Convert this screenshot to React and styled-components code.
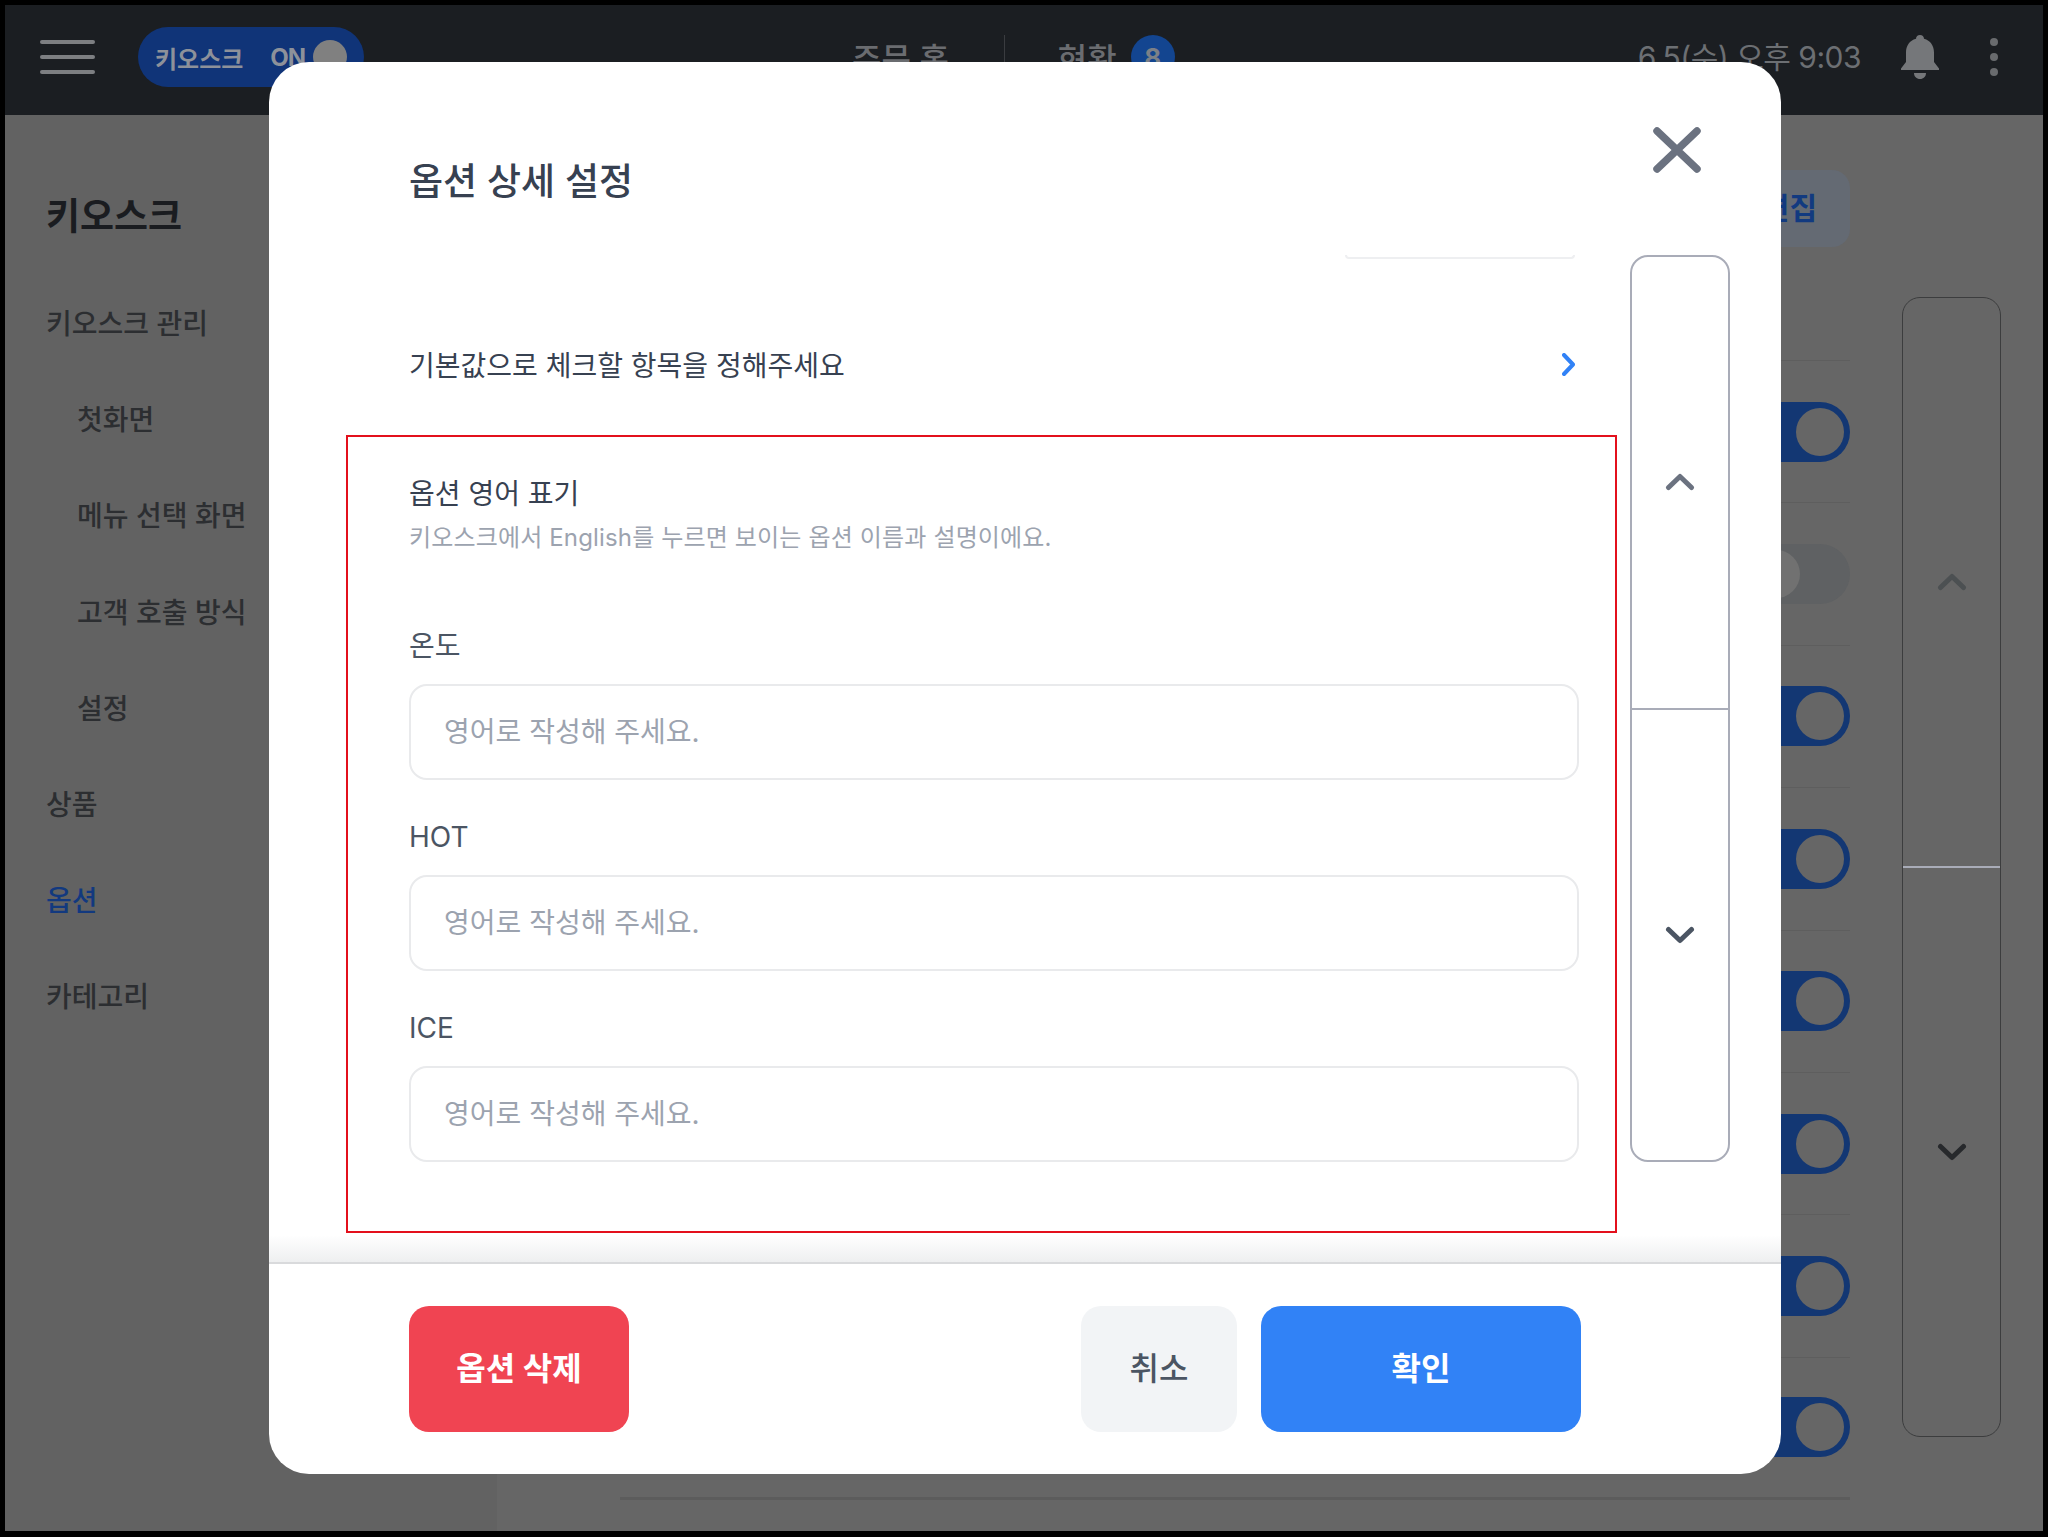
import React from "react";
import styled, { createGlobalStyle } from "styled-components";

const GlobalStyle = createGlobalStyle`
  * {
    box-sizing: border-box;
  }
  html,
  body {
    margin: 0;
    padding: 0;
    background: #000;
  }
  body {
    font-family: Inter, "Noto Sans CJK KR", sans-serif;
  }
`;

const menuItems = [
  { label: "키오스크 관리" },
  { label: "첫화면", sub: true },
  { label: "메뉴 선택 화면", sub: true },
  { label: "고객 호출 방식", sub: true },
  { label: "설정", sub: true },
  { label: "상품" },
  { label: "옵션", active: true },
  { label: "카테고리" },
];

const toggles = [true, false, true, true, true, true, true, true];
const fields = ["온도", "HOT", "ICE"];

const Chevron = ({ dir, color, width = 30, height = 18, stroke = 5 }) => {
  const points = {
    up: `${stroke / 2 + 1},${height - stroke / 2 - 1} ${width / 2},${stroke / 2 + 1} ${width - stroke / 2 - 1},${height - stroke / 2 - 1}`,
    down: `${stroke / 2 + 1},${stroke / 2 + 1} ${width / 2},${height - stroke / 2 - 1} ${width - stroke / 2 - 1},${stroke / 2 + 1}`,
    right: `${stroke / 2},${stroke / 2} ${width - stroke / 2},${height / 2} ${stroke / 2},${height - stroke / 2}`,
  }[dir];
  return (
    <svg width={width} height={height} viewBox={`0 0 ${width} ${height}`} fill="none">
      <polyline
        points={points}
        stroke={color}
        strokeWidth={stroke}
        strokeLinecap="round"
        strokeLinejoin="round"
      />
    </svg>
  );
};

const ScrollControl = ({ dark }) => (
  <ScrollBox $dark={dark}>
    <ScrollHalf $dark={dark}>
      <Chevron dir="up" color={dark ? "#4c5052" : "#6b7280"} />
    </ScrollHalf>
    <ScrollHalf $dark={dark}>
      <Chevron dir="down" color={dark ? "#27292c" : "#4b5563"} />
    </ScrollHalf>
  </ScrollBox>
);

const App = () => {
  return (
    <>
      <GlobalStyle />
      <Shell>
        <TopBar>
          <Hamburger>
            <span />
            <span />
            <span />
          </Hamburger>
          <KioskPill>
            <PillLabel>키오스크</PillLabel>
            <PillSwitch>
              <PillState>ON</PillState>
              <PillKnob />
            </PillSwitch>
          </KioskPill>
          <CenterNav>
            <NavText>주문 홈</NavText>
            <NavDivider />
            <NavText>현황</NavText>
            <NavBadge>8</NavBadge>
          </CenterNav>
          <TopRight>
            <TimeText>6.5(수) 오후 9:03</TimeText>
            <svg width="38" height="44" viewBox="0 0 38 44" fill="#75777a">
              <path d="M19 0c2.4 0 4 1.700 4 3.800C29.500 5.500 33 11 33 17.500V27l5 6.500V35H0v-1.500L5 27v-9.500C5 11 8.500 5.500 15 3.800 15 1.700 16.600 0 19 0z" />
              <path d="M13 38h12c0 3.500-2.500 6-6 6s-6-2.500-6-6z" />
            </svg>
            <MoreDots>
              <span />
              <span />
              <span />
            </MoreDots>
          </TopRight>
        </TopBar>

        <PageBody>
          <Sidebar>
            <SideTitle>키오스크</SideTitle>
            {menuItems.map((item) => (
              <SideItem key={item.label} $sub={item.sub} $active={item.active}>
                {item.label}
              </SideItem>
            ))}
          </Sidebar>
          <Main>
            <OptionColumn>
              <EditBar>
                <EditButton>편집</EditButton>
              </EditBar>
              <ListHead />
              {toggles.map((on, i) => (
                <OptionRow key={i} $last={i === toggles.length - 1}>
                  <Toggle $on={on}>
                    <ToggleKnob $on={on} />
                  </Toggle>
                </OptionRow>
              ))}
            </OptionColumn>
            <PageScroll>
              <ScrollControl dark />
            </PageScroll>
          </Main>
        </PageBody>

        <DialogLayer>
          <Modal>
            <ModalHeader>
              <ModalTitle>옵션 상세 설정</ModalTitle>
              <CloseButton aria-label="닫기">
                <svg width="48" height="46" viewBox="0 0 48 46" fill="none">
                  <path
                    d="M4 4l40 38M44 4L4 42"
                    stroke="#6b7280"
                    strokeWidth="7.5"
                    strokeLinecap="round"
                  />
                </svg>
              </CloseButton>
            </ModalHeader>

            <ModalBody>
              <ContentColumn>
                <ClippedInputEdge />
                <DefaultRow>
                  <RowText>기본값으로 체크할 항목을 정해주세요</RowText>
                  <Chevron dir="right" color="#3182f6" width={13} height={23} stroke={4} />
                </DefaultRow>
                <HighlightBox>
                  <SectionTitle>옵션 영어 표기</SectionTitle>
                  <SectionHint>키오스크에서 English를 누르면 보이는 옵션 이름과 설명이에요.</SectionHint>
                  <FieldList>
                    {fields.map((name) => (
                      <Field key={name}>
                        <FieldLabel>{name}</FieldLabel>
                        <FieldInput placeholder="영어로 작성해 주세요." readOnly />
                      </Field>
                    ))}
                  </FieldList>
                </HighlightBox>
              </ContentColumn>
              <ScrollControl />
            </ModalBody>

            <ModalFooter>
              <DeleteButton>옵션 삭제</DeleteButton>
              <FooterRight>
                <CancelButton>취소</CancelButton>
                <ConfirmButton>확인</ConfirmButton>
              </FooterRight>
            </ModalFooter>
          </Modal>
        </DialogLayer>
      </Shell>
    </>
  );
};

export default App;

const Shell = styled.div`
  position: relative;
  margin: 5px;
  width: 2038px;
  height: 1526px;
  display: flex;
  flex-direction: column;
  overflow: hidden;
  background: #666;
`;

const TopBar = styled.header`
  height: 110px;
  flex-shrink: 0;
  display: flex;
  align-items: center;
  padding: 0 45px 6px 35px;
  background: #1b1e22;
`;

const Hamburger = styled.div`
  width: 55px;
  display: flex;
  flex-direction: column;
  gap: 11px;
  span {
    height: 4px;
    border-radius: 2px;
    background: #7d7f82;
  }
`;

const KioskPill = styled.div`
  width: 226px;
  height: 60px;
  margin-left: 43px;
  padding-left: 17px;
  display: flex;
  align-items: center;
  border-radius: 30px;
  background: #103478;
`;

const PillLabel = styled.span`
  font-size: 24px;
  font-weight: 700;
  color: #8d919a;
  white-space: nowrap;
`;

const PillSwitch = styled.div`
  display: flex;
  align-items: center;
  margin-left: 27px;
  gap: 8px;
`;

const PillState = styled.span`
  font-size: 24px;
  font-weight: 700;
  letter-spacing: -1px;
  color: #8d919a;
`;

const PillKnob = styled.span`
  width: 34px;
  height: 34px;
  border-radius: 50%;
  background: #808080;
`;

const CenterNav = styled.div`
  display: flex;
  align-items: center;
  margin-left: 488px;
`;

const NavText = styled.span`
  font-size: 32px;
  font-weight: 500;
  color: #6a6c70;
  white-space: nowrap;
`;

const NavDivider = styled.span`
  width: 1px;
  height: 44px;
  margin: 0 53px 0 55px;
  background: #3a3c40;
`;

const NavBadge = styled.span`
  width: 44px;
  height: 44px;
  margin-left: 14px;
  display: flex;
  align-items: center;
  justify-content: center;
  border-radius: 50%;
  font-size: 26px;
  font-weight: 700;
  color: #7c8087;
  background: #134590;
`;

const TopRight = styled.div`
  margin-left: auto;
  display: flex;
  align-items: center;
`;

const TimeText = styled.span`
  margin: 0 40px 5px 0;
  font-size: 30px;
  letter-spacing: -0.5px;
  color: #6c6f73;
  white-space: nowrap;
`;

const MoreDots = styled.div`
  margin-left: 51px;
  display: flex;
  flex-direction: column;
  gap: 7px;
  span {
    width: 8px;
    height: 8px;
    border-radius: 50%;
    background: #696b6e;
  }
`;

const PageBody = styled.div`
  flex: 1;
  display: flex;
  min-height: 0;
`;

const Sidebar = styled.nav`
  width: 492px;
  flex-shrink: 0;
  padding: 79px 0 0 41px;
  display: flex;
  flex-direction: column;
  background: #626262;
`;

const SideTitle = styled.h2`
  margin: 0 0 66px;
  font-size: 37px;
  line-height: 46px;
  font-weight: 700;
  color: #1a1c20;
`;

const SideItem = styled.div`
  height: 96.2px;
  padding-left: ${(props) => (props.$sub ? "31px" : "0")};
  font-size: 28px;
  line-height: 36px;
  font-weight: 500;
  color: ${(props) => (props.$active ? "#12397f" : "#2c2e31")};
`;

const Main = styled.main`
  flex: 1;
  display: flex;
  padding: 55px 42px 0 123px;
  gap: 52px;
`;

const OptionColumn = styled.div`
  flex: 1;
  display: flex;
  flex-direction: column;
`;

const EditBar = styled.div`
  display: flex;
  justify-content: flex-end;
`;

const EditButton = styled.button`
  height: 77px;
  width: 220px;
  padding: 0 33px 5px 0;
  border: 0;
  border-radius: 18px;
  text-align: right;
  font-family: inherit;
  font-size: 30px;
  font-weight: 700;
  color: #123a80;
  background: #646a73;
`;

const ListHead = styled.div`
  height: 114px;
  border-bottom: 1px solid #5e5e5e;
`;

const OptionRow = styled.div`
  height: 142.4px;
  display: flex;
  align-items: center;
  justify-content: flex-end;
  border-bottom: ${(props) => (props.$last ? "3px solid #5c5c5c" : "1px solid #5e5e5e")};
`;

const Toggle = styled.div`
  position: relative;
  width: 104px;
  height: 60px;
  border-radius: 30px;
  background: ${(props) => (props.$on ? "#133773" : "#5f6163")};
`;

const ToggleKnob = styled.span`
  position: absolute;
  top: 6px;
  left: ${(props) => (props.$on ? "50px" : "6px")};
  width: 48px;
  height: 48px;
  border-radius: 50%;
  background: ${(props) => (props.$on ? "#666" : "#717171")};
`;

const PageScroll = styled.div`
  width: 99px;
  height: 1140px;
  margin-top: 127px;
  display: flex;
`;

const ScrollBox = styled.div`
  width: ${(props) => (props.$dark ? "99px" : "100px")};
  height: ${(props) => (props.$dark ? "100%" : "907px")};
  flex-shrink: 0;
  display: flex;
  flex-direction: column;
  border: ${(props) => (props.$dark ? "1px solid #3c3d3e" : "2px solid #a9acb8")};
  border-radius: 18px;
`;

const ScrollHalf = styled.div`
  flex: 1;
  display: flex;
  align-items: center;
  justify-content: center;
  & + & {
    border-top: ${(props) => (props.$dark ? "1px solid #3c3d3e" : "2px solid #a9acb8")};
  }
`;

const DialogLayer = styled.div`
  position: absolute;
  inset: 0;
  display: flex;
  align-items: center;
  justify-content: center;
`;

const Modal = styled.div`
  position: relative;
  width: 1512px;
  height: 1412px;
  margin-left: 2px;
  display: flex;
  flex-direction: column;
  overflow: hidden;
  border-radius: 40px;
  background: #fff;
`;

const ModalHeader = styled.div`
  height: 193px;
  flex-shrink: 0;
  padding: 97px 0 0 140px;
`;

const ModalTitle = styled.h1`
  margin: 0;
  font-size: 37px;
  line-height: 46px;
  font-weight: 500;
  color: #374151;
`;

const CloseButton = styled.button`
  position: absolute;
  top: 65px;
  right: 80px;
  padding: 0;
  border: 0;
  display: flex;
  background: transparent;
`;

const ModalBody = styled.div`
  height: 1007px;
  flex-shrink: 0;
  display: flex;
  gap: 13px;
  padding-left: 77px;
`;

const ContentColumn = styled.div`
  width: 1271px;
  flex-shrink: 0;
  display: flex;
  flex-direction: column;
`;

const ClippedInputEdge = styled.div`
  width: 230px;
  height: 4px;
  margin-left: 999px;
  flex-shrink: 0;
  border: 2px solid #eeeff1;
  border-top: 0;
  border-radius: 0 0 14px 14px;
`;

const DefaultRow = styled.div`
  height: 176px;
  flex-shrink: 0;
  padding: 34px 42px 0 63px;
  display: flex;
  align-items: center;
  justify-content: space-between;
`;

const RowText = styled.span`
  font-size: 28px;
  color: #374151;
`;

const HighlightBox = styled.section`
  height: 798px;
  flex-shrink: 0;
  padding: 39px 36px 0 61px;
  border: 2px solid #e3101c;
`;

const SectionTitle = styled.h3`
  margin: 0;
  font-size: 28px;
  line-height: 36px;
  font-weight: 400;
  color: #374151;
`;

const SectionHint = styled.p`
  margin: 10px 0 0;
  font-size: 24px;
  line-height: 32px;
  letter-spacing: 0.15px;
  color: #9ca3af;
`;

const FieldList = styled.div`
  margin-top: 74px;
  display: flex;
  flex-direction: column;
  gap: 39px;
`;

const Field = styled.div`
  display: flex;
  flex-direction: column;
  gap: 20px;
`;

const FieldLabel = styled.label`
  font-size: 28px;
  line-height: 36px;
  color: #4b5563;
`;

const FieldInput = styled.input`
  width: 100%;
  height: 96px;
  padding: 0 33px;
  border: 2px solid #e9eaec;
  border-radius: 18px;
  outline: 0;
  font-family: inherit;
  font-size: 28px;
  color: #374151;
  background: #fff;
  &::placeholder {
    color: #9ca3af;
    opacity: 1;
  }
`;

const ModalFooter = styled.div`
  position: relative;
  flex: 1;
  padding: 42px 200px 0 140px;
  display: flex;
  justify-content: space-between;
  align-items: flex-start;
  border-top: 2px solid #d9dadc;
  &::before {
    content: "";
    position: absolute;
    left: 0;
    right: 0;
    top: -29px;
    height: 27px;
    background: linear-gradient(to bottom, rgba(238, 239, 240, 0), #eeeff0);
  }
`;

const FooterRight = styled.div`
  display: flex;
  gap: 24px;
`;

const FooterButton = styled.button`
  height: 126px;
  padding: 0 0 7px;
  border: 0;
  border-radius: 20px;
  font-family: inherit;
  font-size: 32px;
  font-weight: 700;
`;

const DeleteButton = styled(FooterButton)`
  width: 220px;
  color: #fff;
  background: #f04452;
`;

const CancelButton = styled(FooterButton)`
  width: 156px;
  font-weight: 500;
  color: #4b5563;
  background: #f2f4f6;
`;

const ConfirmButton = styled(FooterButton)`
  width: 320px;
  color: #fff;
  background: #3182f6;
`;
